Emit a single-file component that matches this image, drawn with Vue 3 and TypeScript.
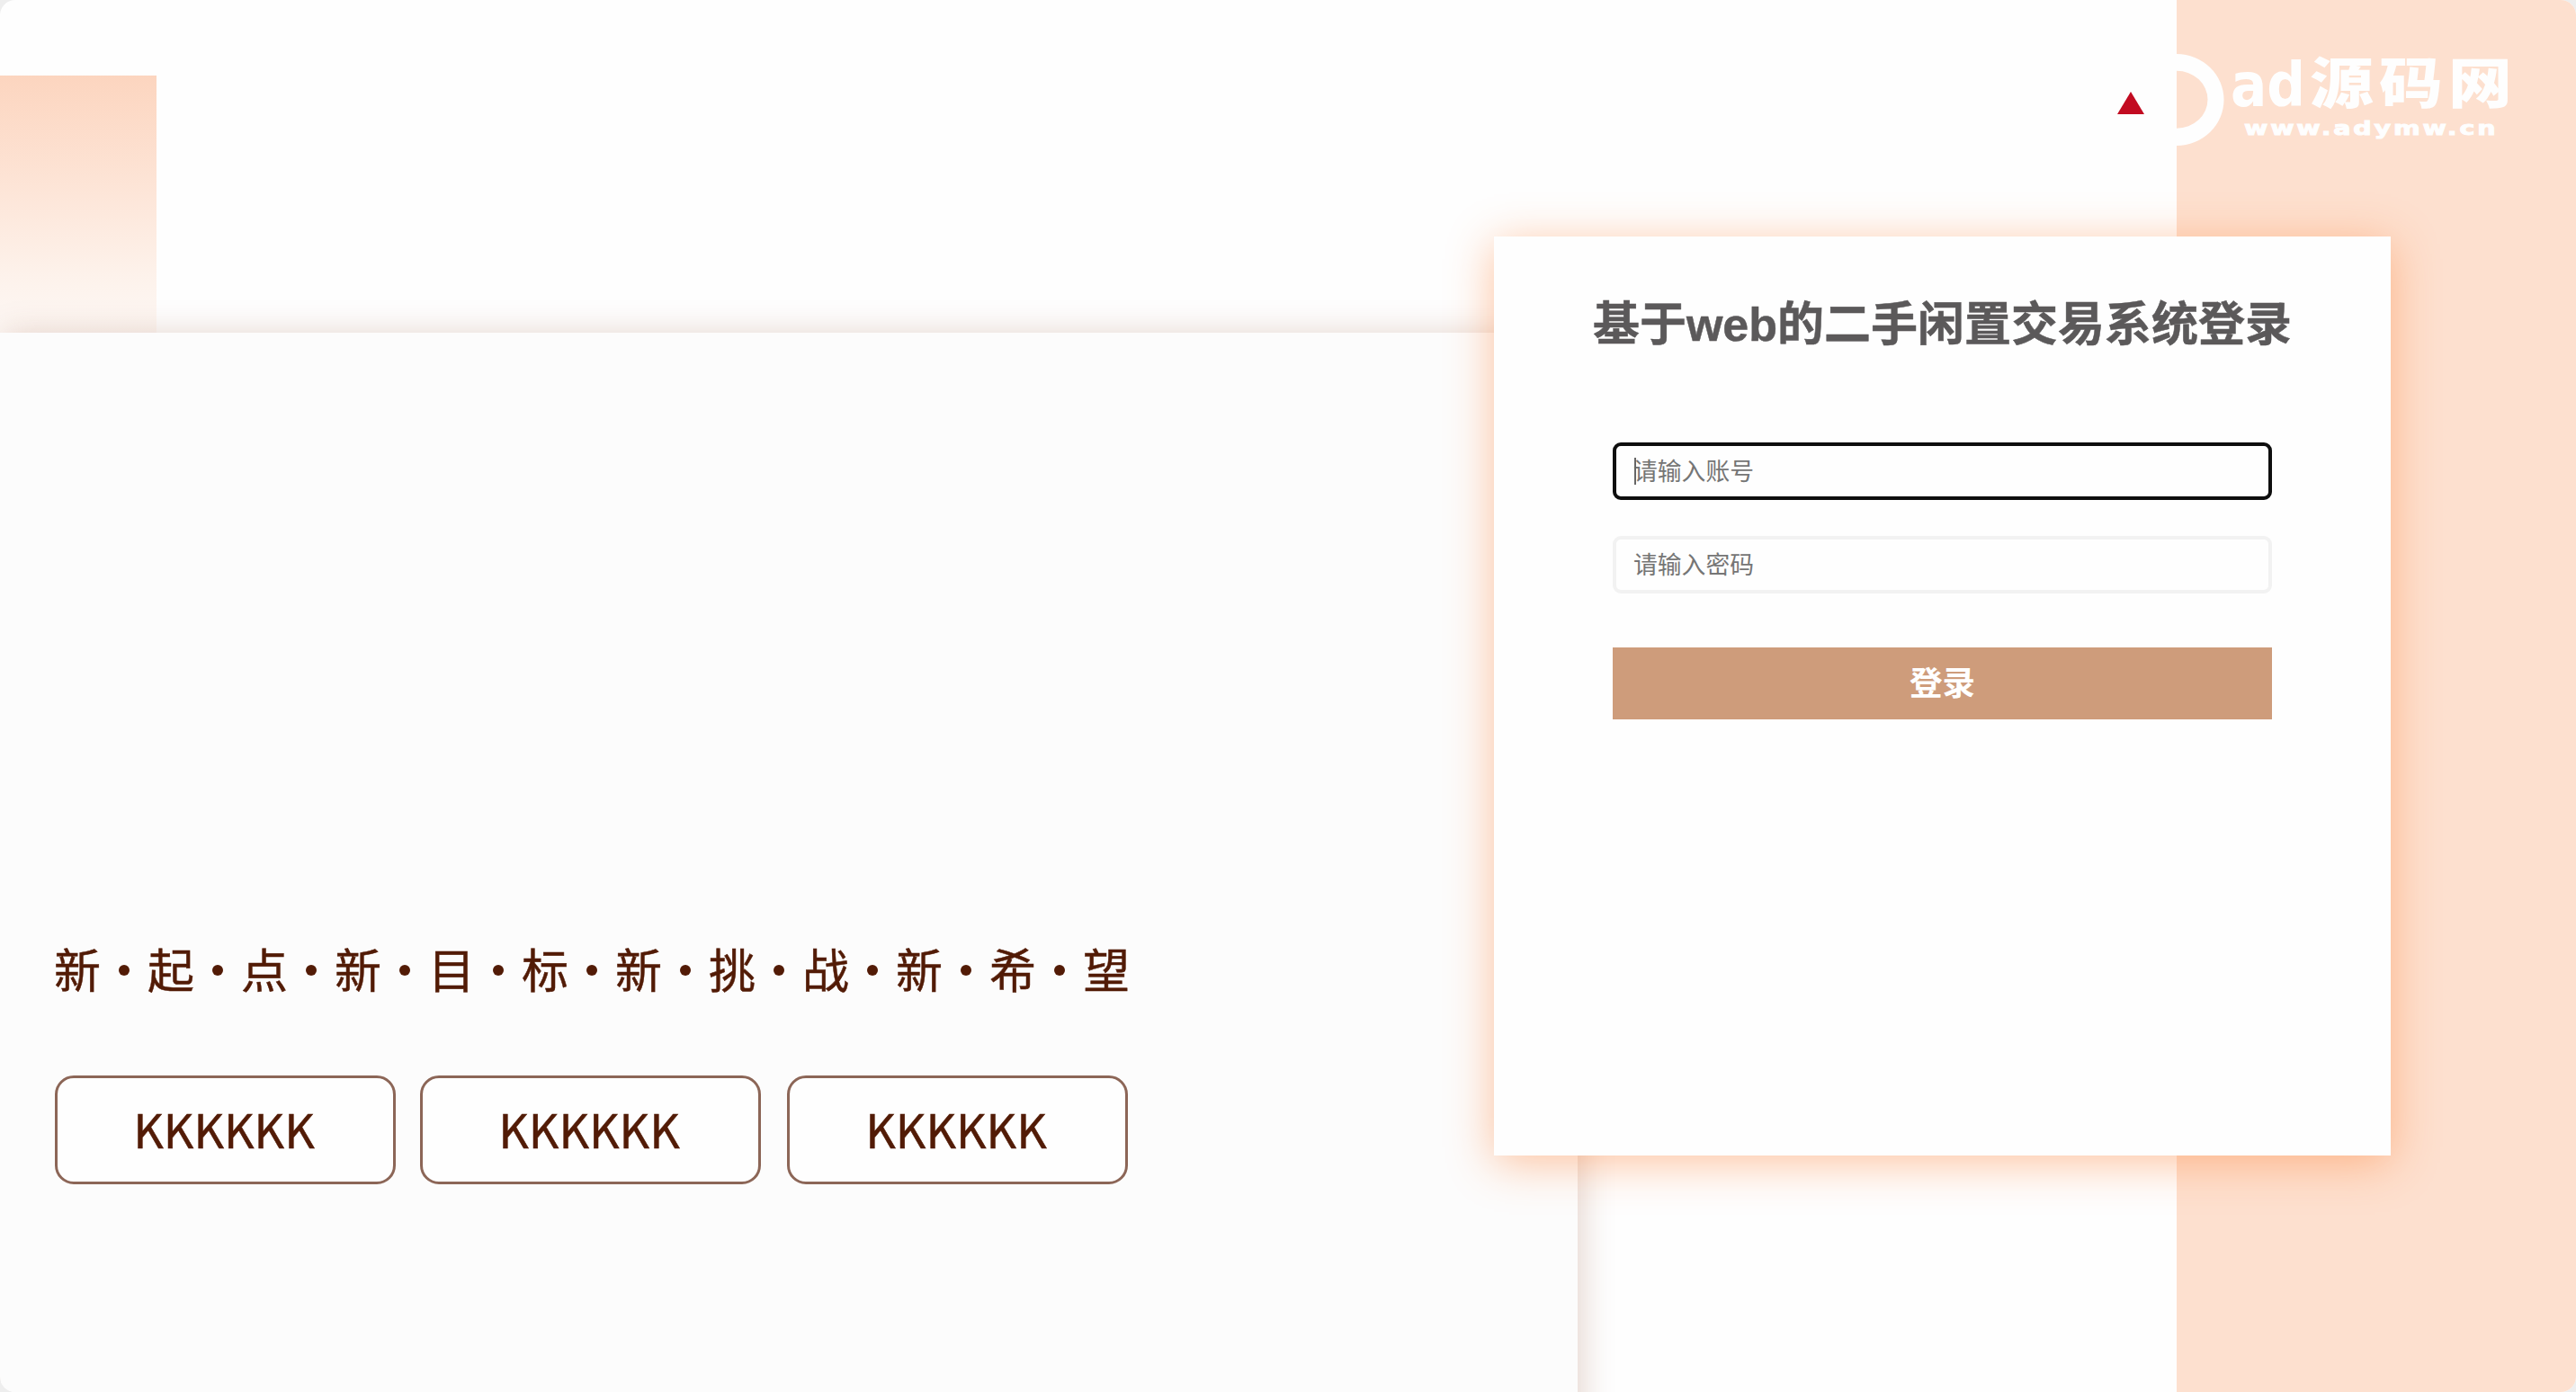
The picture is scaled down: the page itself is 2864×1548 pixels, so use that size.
<script setup lang="ts">
import { ref } from 'vue'

const account = ref('')
const password = ref('')
const slogan: string[] = [...'新起点新目标新挑战新希望']
const tags: string[] = ['KKKKKK', 'KKKKKK', 'KKKKKK']
</script>

<template>
  <div class="page">
    <div class="fade-block"></div>
    <div class="side-strip"></div>

    <section class="showcase">
      <p class="slogan">
        <template v-for="(ch, i) in slogan" :key="i">
          <i v-if="i > 0" class="dot"></i><span>{{ ch }}</span>
        </template>
      </p>
      <div class="tags">
        <div v-for="(tag, i) in tags" :key="i" class="tag">{{ tag }}</div>
      </div>
    </section>

    <svg class="mark" width="30" height="25" viewBox="0 0 30 25">
      <path d="M15 0 30 25H0Z" fill="#c20b21" />
    </svg>

    <svg class="brand" width="394" height="150" viewBox="0 0 394 150">
      <path d="M0 24A52.5 51 0 0 1 0 126V106.700A34.500 32 0 0 0 0 42.700Z" fill="#fefefe" />
      <text class="latin" transform="translate(60 82) scale(1.24 1)" textLength="67" lengthAdjust="spacingAndGlyphs">ad</text>
      <g class="han">
        <text transform="translate(148 79) scale(1.16 1)">源</text>
        <text transform="translate(225 79) scale(1.16 1)">码</text>
        <text transform="translate(302 79) scale(1.16 1)">网</text>
      </g>
      <text class="url" transform="translate(75 114) scale(1.3 1)" textLength="215" lengthAdjust="spacing">www.adymw.cn</text>
    </svg>

    <form class="card" @submit.prevent>
      <h1>基于web的二手闲置交易系统登录</h1>
      <div class="field active">
        <input v-model="account" type="text" placeholder="请输入账号" />
        <span class="caret"></span>
      </div>
      <div class="field">
        <input v-model="password" type="password" placeholder="请输入密码" />
      </div>
      <button type="submit">登录</button>
    </form>
  </div>
</template>

<style>
body {
  background: #eeeeee;
}
</style>

<style scoped>
.page {
  position: relative;
  height: 1548px;
  overflow: hidden;
  border-radius: 17px;
  background: #fefefe;
  font-family: "Liberation Sans", "Noto Sans CJK SC", sans-serif;
}
.side-strip {
  position: absolute;
  top: 0;
  right: 0;
  width: 444px;
  height: 100%;
  background: #fde0cf;
}
.fade-block {
  position: absolute;
  top: 84px;
  left: 0;
  width: 174px;
  height: 286px;
  background: linear-gradient(#fcd5bf, #fde4d6 42%, #fdf2eb 78%, #fdf8f5);
}
.showcase {
  position: absolute;
  top: 370px;
  left: 0;
  box-sizing: border-box;
  width: 1754px;
  height: 1240px;
  padding: 669px 0 0 60px;
  background: #fcfcfc;
  box-shadow: 3px 3px 36px rgba(130, 55, 20, 0.23);
  color: #521b06;
  font-family: "Noto Sans CJK SC", sans-serif;
  font-size: 52px;
  -webkit-text-stroke: 0.5px #521b06;
}
.slogan {
  display: flex;
  align-items: center;
  height: 76px;
  margin: 0;
  line-height: 76px;
}
.slogan span {
  flex: none;
  width: 52px;
}
.dot {
  position: relative;
  top: 2px;
  flex: none;
  width: 12px;
  height: 12px;
  margin: 0 20px;
  border-radius: 50%;
  background: #521b06;
}
.tags {
  display: flex;
  gap: 28px;
  margin: 81px 0 0 1px;
}
.tag {
  box-sizing: border-box;
  width: 379px;
  height: 121px;
  border: 3px solid #8c6657;
  border-radius: 21px;
  background: #fefefe;
  line-height: 112px;
  text-align: center;
  text-indent: -3px;
}
.tag:nth-child(2) {
  margin-left: -1px;
}
.tag:last-child {
  margin-left: 1px;
}
.mark {
  position: absolute;
  top: 102px;
  left: 2354px;
}
.brand {
  position: absolute;
  top: 36px;
  left: 2420px;
}
.brand text {
  fill: #fefefe;
}
.latin {
  font-family: "DejaVu Sans", sans-serif;
  font-size: 68px;
  font-weight: 700;
}
.han {
  font-family: "Noto Sans CJK SC", sans-serif;
  font-size: 61px;
  font-weight: 900;
}
.url {
  font-family: "DejaVu Sans", sans-serif;
  font-size: 22px;
  font-weight: 700;
  stroke: #fefefe;
  stroke-width: 1px;
}
.card {
  position: absolute;
  top: 263px;
  left: 1661px;
  box-sizing: border-box;
  width: 997px;
  height: 1022px;
  padding: 65px 132px 0;
  background: #fefefe;
  box-shadow: 0 8px 48px rgba(255, 130, 55, 0.48);
}
h1 {
  margin: 0 -100px 98px;
  color: #5b595a;
  font-size: 52px;
  font-weight: 700;
  line-height: 66px;
  text-align: center;
  white-space: nowrap;
  -webkit-text-stroke: 0.5px #5b595a;
}
.field {
  position: relative;
  box-sizing: border-box;
  height: 64px;
  margin-bottom: 40px;
  border: 4px solid #f2f2f2;
  border-radius: 9px;
  background: #fefefe;
}
.field.active {
  border-color: #0e0e0e;
}
.field input {
  display: block;
  box-sizing: border-box;
  width: 100%;
  height: 56px;
  padding: 0 20px 3px 19px;
  border: 0;
  outline: 0;
  background: transparent;
  font: 26.8px "Noto Sans CJK SC", sans-serif;
}
.field input::placeholder {
  color: #757575;
}
.caret {
  position: absolute;
  top: 13px;
  left: 20px;
  width: 2px;
  height: 30px;
  background: #666666;
}
button {
  display: block;
  width: 100%;
  height: 80px;
  margin-top: 60px;
  padding: 1px 0 0;
  border: 0;
  background: #ce9c7b;
  color: #ffffff;
  font: 700 36.5px/79px "Liberation Sans", "Noto Sans CJK SC", sans-serif;
}
</style>
